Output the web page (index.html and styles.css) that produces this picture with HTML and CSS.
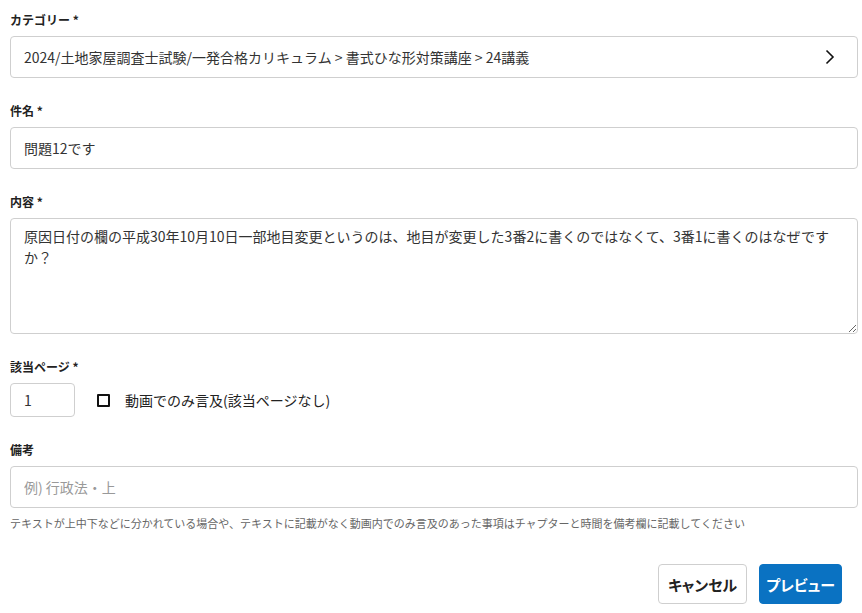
FILE: index.html
```html
<!DOCTYPE html>
<html lang="ja">
<head>
<meta charset="utf-8">
<link rel="stylesheet" href="styles.css">
</head>
<body>
<form class="form">
  <div class="field">
    <div class="label">カテゴリー *</div>
    <div class="box select">
      <span>2024/土地家屋調査士試験/一発合格カリキュラム &gt; 書式ひな形対策講座 &gt; 24講義</span>
      <svg class="chev" width="10" height="16" viewBox="0 0 10 16"><path d="M1.5 1.5 L8 8 L1.5 14.5" fill="none" stroke="#111" stroke-width="1.6"/></svg>
    </div>
  </div>
  <div class="field">
    <div class="label">件名 *</div>
    <input class="box input" type="text" value="問題12です">
  </div>
  <div class="field">
    <div class="label">内容 *</div>
    <textarea class="box textarea">原因日付の欄の平成30年10月10日一部地目変更というのは、地目が変更した3番2に書くのではなくて、3番1に書くのはなぜですか？</textarea>
  </div>
  <div class="field">
    <div class="label">該当ページ *</div>
    <div class="row">
      <input class="box page" type="text" value="1">
      <label class="check"><span class="checkbox"></span><span>動画でのみ言及(該当ページなし)</span></label>
    </div>
  </div>
  <div class="field last">
    <div class="label">備考</div>
    <input class="box input" type="text" placeholder="例) 行政法・上">
    <p class="help">テキストが上中下などに分かれている場合や、テキストに記載がなく動画内でのみ言及のあった事項はチャプターと時間を備考欄に記載してください</p>
  </div>
  <div class="actions">
    <button type="button" class="btn cancel">キャンセル</button>
    <button type="button" class="btn primary">プレビュー</button>
  </div>
</form>
</body>
</html>
```

FILE: styles.css
```css
* { box-sizing: border-box; }
html, body { margin: 0; padding: 0; background: #fff; }
body {
  font-family: "Noto Sans CJK JP", "Noto Sans", sans-serif;
  color: #333;
  padding: 11px 4px 0 10px;
}
.form { display: flex; flex-direction: column; }
.field { margin-bottom: 24px; }
.field.last { margin-bottom: 0; }
.label {
  font-size: 12px;
  font-weight: 700;
  line-height: 18px;
  color: #222;
  margin-bottom: 7px;
}
.box {
  display: block;
  width: 100%;
  border: 1px solid #cfcfcf;
  border-radius: 4px;
  background: #fff;
  font-family: inherit;
  font-size: 14px;
  color: #333;
  padding: 0 13px;
  outline: none;
  margin: 0;
}
.select {
  height: 42px;
  display: flex;
  align-items: center;
  justify-content: space-between;
  padding-right: 22px;
}
.input { height: 42px; line-height: 40px; }
.input::placeholder { color: #999; }
.textarea {
  height: 116px;
  line-height: 21px;
  padding-top: 7px;
  padding-bottom: 7px;
  resize: vertical;
}
.row { display: flex; align-items: center; }
.page { width: 65px; height: 34px; padding: 0 13px; }
.check {
  display: flex;
  align-items: center;
  margin-left: 22px;
  font-size: 14px;
  color: #222;
}
.checkbox {
  width: 13px;
  height: 13px;
  border: 2px solid #111;
  border-radius: 1px;
  margin-right: 15px;
}
.help {
  margin: 7px 0 0;
  font-size: 11px;
  line-height: 16px;
  color: #666;
}
.actions {
  display: flex;
  justify-content: flex-end;
  gap: 12px;
  margin-top: 33px;
  padding-right: 16px;
}
.btn {
  height: 40px;
  border-radius: 4px;
  font-family: inherit;
  font-size: 15px;
  font-weight: 700;
  font-feature-settings: "palt";
  white-space: nowrap;
  padding: 0;
  cursor: pointer;
}
.cancel { width: 89px; background: #fff; border: 1px solid #cfcfcf; color: #222; }
.primary { width: 83px; background: #0a72c2; border: 1px solid #0a72c2; color: #fff; }
```
